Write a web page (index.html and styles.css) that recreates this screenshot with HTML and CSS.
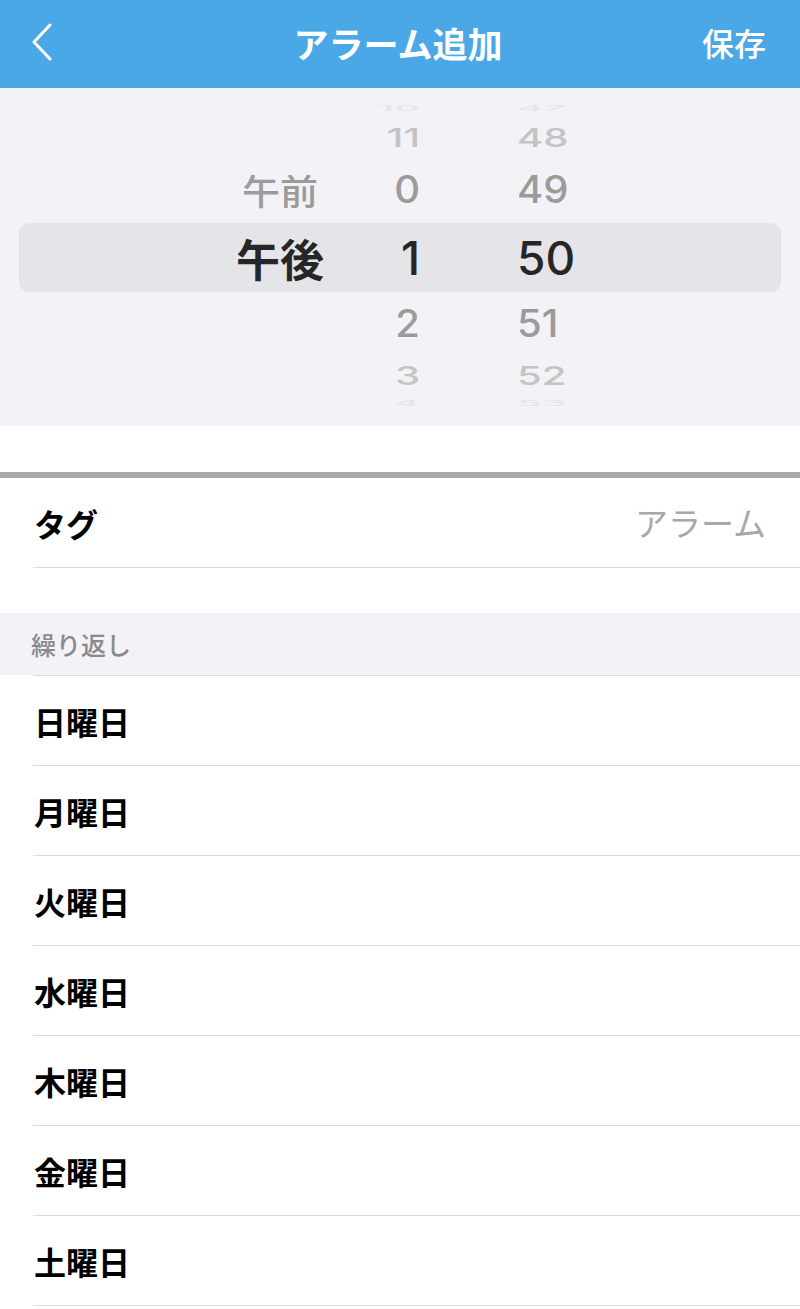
FILE: index.html
```html
<!DOCTYPE html>
<html lang="ja">
<head>
  <meta charset="UTF-8">
  <meta name="viewport" content="width=device-width, initial-scale=1.0">
  <title>アラーム追加</title>
  <link rel="stylesheet" href="styles.css">
</head>
<body>
  <header class="navbar">
    <button class="nav-back" aria-label="戻る">
      <svg width="24" height="38" viewBox="0 0 24 38">
        <polyline points="20,2 4,19 20,36" fill="none" stroke="#fff" stroke-width="3" stroke-linecap="round" stroke-linejoin="round"/>
      </svg>
    </button>
    <h1 class="nav-title">アラーム追加</h1>
    <button class="nav-save">保存</button>
  </header>

  <section class="picker">
    <div class="wheel-row row-edge">
      <span class="ampm"></span><span class="hour">10</span><span class="min">47</span>
    </div>
    <div class="wheel-row row-far">
      <span class="ampm"></span><span class="hour">11</span><span class="min">48</span>
    </div>
    <div class="wheel-row row-near row-near-top">
      <span class="ampm">午前</span><span class="hour">0</span><span class="min">49</span>
    </div>
    <div class="wheel-row row-selected">
      <span class="ampm">午後</span><span class="hour">1</span><span class="min">50</span>
    </div>
    <div class="wheel-row row-near">
      <span class="ampm"></span><span class="hour">2</span><span class="min">51</span>
    </div>
    <div class="wheel-row row-far row-far-bottom">
      <span class="ampm"></span><span class="hour">3</span><span class="min">52</span>
    </div>
    <div class="wheel-row row-edge row-edge-bottom">
      <span class="ampm"></span><span class="hour">4</span><span class="min">53</span>
    </div>
  </section>

  <div class="spacer"></div>
  <div class="divider-thick"></div>

  <div class="cell cell-tag">
    <span class="cell-label">タグ</span>
    <span class="cell-value">アラーム</span>
  </div>

  <div class="spacer spacer-small"></div>

  <div class="section-header">繰り返し</div>

  <ul class="day-list">
    <li class="cell">日曜日</li>
    <li class="cell">月曜日</li>
    <li class="cell">火曜日</li>
    <li class="cell">水曜日</li>
    <li class="cell">木曜日</li>
    <li class="cell">金曜日</li>
    <li class="cell">土曜日</li>
  </ul>
</body>
</html>
```

FILE: styles.css
```css
body {
  margin: 0;
  background-color: #fff;
  font-family: "Noto Sans CJK JP", "Noto Sans", sans-serif;
  color: #000;
}

/* nav bar */
.navbar {
  height: 88px;
  background-color: #4ba8e6;
  display: grid;
  grid-template-columns: 1fr auto 1fr;
  align-items: center;
  padding: 0 34px 0 30px;
}

.navbar button {
  background: none;
  border: none;
  padding: 0;
  color: #fff;
  font-family: inherit;
  cursor: pointer;
}

.nav-back {
  justify-self: start;
  display: flex;
  margin-top: -4px;
}

.nav-title {
  margin: 0;
  font-size: 35px;
  font-weight: 700;
  color: #fff;
  line-height: 1;
  margin-top: -4px;
}

.nav-save {
  justify-self: end;
  font-size: 32px;
  font-weight: 500;
  line-height: 1;
  margin-top: -4px;
}

/* time wheel */
.picker {
  height: 338px;
  box-sizing: border-box;
  padding-top: 8px;
  background-color: #f2f2f7;
  overflow: hidden;
}

.wheel-row {
  display: flex;
  align-items: center;
  padding-left: 200px;
  font-family: "Inter", "Noto Sans CJK JP", sans-serif;
  font-weight: 500;
  font-size: 40px;
  line-height: 1;
  color: #9b9b9b;
}

.wheel-row span {
  display: block;
}

.ampm {
  width: 160px;
  text-align: center;
  font-family: "Noto Sans CJK JP", sans-serif;
  font-size: 38px;
}

.hour {
  width: 60px;
  text-align: right;
}

.min {
  margin-left: 97px;
  width: 120px;
  text-align: left;
}

.row-edge {
  height: 24px;
  color: #e6e6ea;
}

.row-edge span {
  transform: scaleY(0.2);
}

.row-edge-bottom {
  height: 12px;
}

.row-far {
  height: 36px;
  color: #c4c4c4;
}

.row-far span {
  transform: scaleY(0.64);
}

.row-far-bottom {
  height: 42px;
}

.row-near {
  height: 63px;
}

.row-near span {
  transform: scaleY(0.94);
}

.row-near-top {
  height: 67px;
}

.row-selected {
  height: 69px;
  margin: 0 19px;
  padding-left: 181px;
  border-radius: 10px;
  background-color: #e4e4e9;
  color: #262626;
  font-size: 46px;
}

.row-selected .ampm {
  font-size: 44px;
  font-weight: 700;
}

/* form */
.spacer {
  height: 46px;
}

.spacer-small {
  height: 45px;
}

.divider-thick {
  height: 6px;
  background-color: #a9a9a9;
}

.cell {
  height: 89px;
  margin-left: 33px;
  padding: 0 34px 0 1px;
  border-bottom: 1px solid #dcdcdc;
  display: flex;
  align-items: center;
  justify-content: space-between;
  font-size: 32px;
  font-weight: 700;
  line-height: 1;
}

.cell-value {
  font-weight: 400;
  font-size: 33px;
  color: #a8a8a8;
}

.section-header {
  height: 62px;
  box-sizing: border-box;
  padding-left: 31px;
  background-color: #f2f2f7;
  display: flex;
  align-items: center;
  font-size: 25px;
  font-weight: 500;
  color: #8a8a8e;
}

.day-list {
  list-style: none;
  margin: 0;
  padding: 0;
}

.day-list .cell:first-child {
  border-top: 1px solid #dcdcdc;
}
```
